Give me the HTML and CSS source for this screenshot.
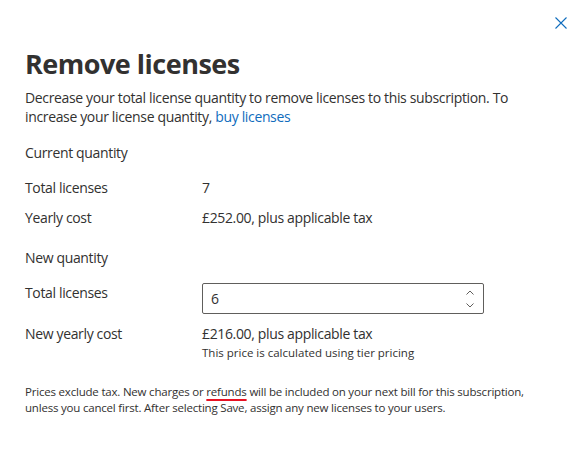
FILE: index.html
```html
<!DOCTYPE html>
<html lang="en">
<head>
    <meta charset="UTF-8">
    <title>Remove licenses</title>
    <link rel="stylesheet" href="styles.css">
</head>
<body>
    <div class="panel">
        <div class="panel-top">
            <button class="close" aria-label="Close">
                <svg width="12" height="12" viewBox="0 0 12 12"><path d="M0.5 0.5L11.5 11.5M11.5 0.5L0.5 11.5" stroke="#0f6cbd" stroke-width="1.1" fill="none"/></svg>
            </button>
        </div>

        <h1>Remove licenses</h1>
        <p class="intro">Decrease your total license quantity to remove licenses to this subscription. To increase your license quantity, <a href="#">buy licenses</a></p>

        <div class="section-title">Current quantity</div>
        <div class="row">
            <div class="label">Total licenses</div>
            <div class="value">7</div>
        </div>
        <div class="row">
            <div class="label">Yearly cost</div>
            <div class="value">£252.00, plus applicable tax</div>
        </div>

        <div class="section-title new">New quantity</div>
        <div class="row row-input">
            <div class="label">Total licenses</div>
            <div class="spin">
                <span class="spin-value">6</span>
                <span class="spin-arrows">
                    <svg width="8" height="5" viewBox="0 0 8 5"><path d="M0.5 4.5L4 1L7.5 4.5" stroke="#605e5c" fill="none"/></svg>
                    <svg width="8" height="5" viewBox="0 0 8 5"><path d="M0.5 0.5L4 4L7.5 0.5" stroke="#605e5c" fill="none"/></svg>
                </span>
            </div>
        </div>
        <div class="row">
            <div class="label">New yearly cost</div>
            <div class="value">
                £216.00, plus applicable tax
                <div class="hint">This price is calculated using tier pricing</div>
            </div>
        </div>

        <p class="note">Prices exclude tax. New charges or <span class="spell">refunds</span> will be included on your next bill for this subscription, unless you cancel first. After selecting Save, assign any new licenses to your users.</p>
    </div>
</body>
</html>
```

FILE: styles.css
```css
body {
    margin: 0;
    background: #fff;
    font-family: "Open Sans", "Noto Sans", sans-serif;
    color: #323130;
}

.panel {
    width: 575px;
    padding: 0 25px;
    box-sizing: border-box;
}

.panel-top {
    display: flex;
    justify-content: flex-end;
    padding-top: 16px;
    margin-right: -18px;
}

.close {
    border: none;
    background: none;
    padding: 0;
    width: 14px;
    height: 14px;
    display: flex;
    align-items: center;
    justify-content: center;
}

h1 {
    margin: 16px 0 0;
    font-size: 27px;
    font-weight: 700;
    line-height: 36px;
    letter-spacing: -0.5px;
}

.intro {
    margin: 6px 0 0;
    font-size: 14px;
    line-height: 19px;
    letter-spacing: -0.35px;
}

.intro a {
    color: #0f6cbd;
    text-decoration: none;
}

.section-title {
    margin-top: 17px;
    font-size: 14px;
    line-height: 19px;
    letter-spacing: -0.35px;
}

.section-title.new {
    margin-top: 21px;
}

.row {
    display: flex;
    align-items: flex-start;
    margin-top: 11px;
    font-size: 14px;
    line-height: 19px;
    letter-spacing: -0.35px;
}

.section-title + .row {
    margin-top: 16px;
}

.label {
    width: 177px;
    flex: none;
}

.spin {
    display: flex;
    align-items: center;
    justify-content: space-between;
    width: 282px;
    height: 31px;
    box-sizing: border-box;
    border: 1px solid #605e5c;
    border-radius: 2px;
    padding: 0 9px 0 8px;
}

.spin-arrows {
    display: flex;
    flex-direction: column;
    gap: 8px;
}

.spin-arrows svg {
    display: block;
}

.row-input + .row {
    margin-top: 10px;
}

.hint {
    margin-top: 2px;
    font-size: 11.5px;
    line-height: 16px;
    letter-spacing: 0;
}

.note {
    margin: 23px 0 0;
    font-size: 11.5px;
    line-height: 16px;
    letter-spacing: -0.2px;
}

.spell {
    text-decoration: underline;
    text-decoration-color: #e81123;
    text-decoration-thickness: 2px;
    text-underline-offset: 3px;
}
```
